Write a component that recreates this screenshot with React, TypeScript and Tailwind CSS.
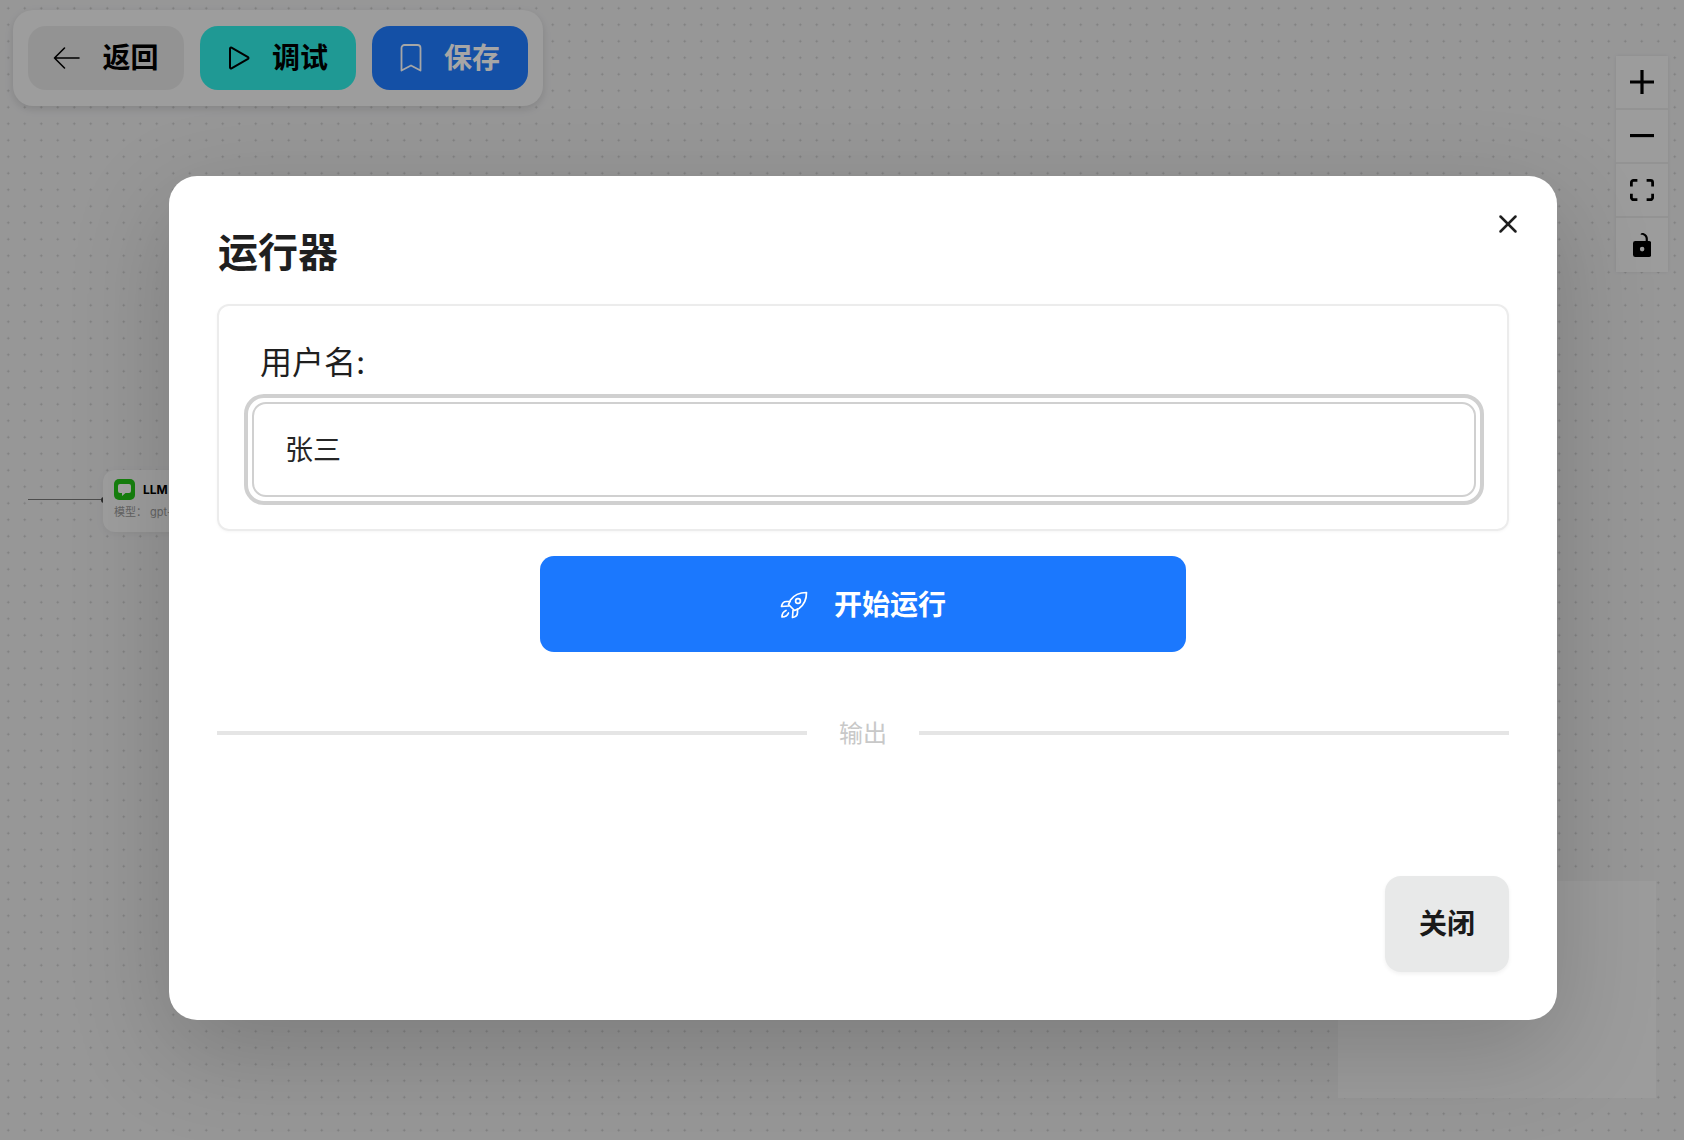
import { X } from "lucide-react"

const font = "font-['Inter','Noto_Sans_CJK_SC',sans-serif]"

function ToolButton({ className, icon, label }: { className: string; icon: React.ReactNode; label: string }) {
  return (
    <button className={`flex h-16 w-[156px] items-center justify-center gap-[22px] rounded-[18px] text-[28px] font-bold ${className}`}>
      {icon}
      <span>{label}</span>
    </button>
  )
}

function ControlButton({ children }: { children: React.ReactNode }) {
  return <button className="flex h-[54px] w-full items-center justify-center border-b-2 border-[#e2e2e2] bg-[#f0f0f0] last:border-b-0">{children}</button>
}

export default function App() {
  return (
    <div className={`relative h-[1140px] w-[1684px] overflow-hidden bg-[#e8e8e9] bg-[radial-gradient(circle,#c0c0c0_0.9px,transparent_1.1px)] bg-[length:16.5px_16.5px] ${font}`}>
      {/* toolbar */}
      <div className="absolute left-[13px] top-[10px] flex gap-4 rounded-[20px] bg-[#f1f1f1] py-4 pl-[15px] pr-[15px] shadow-[0_3px_8px_rgba(0,0,0,0.12)]">
        <ToolButton
          className="bg-[#e2e2e2] text-black"
          icon={
            <svg width="27" height="24" viewBox="0 0 27 24" fill="none" stroke="currentColor" strokeWidth="1.6" strokeLinecap="round" strokeLinejoin="round">
              <path d="M26 12H1.5M11.5 2 1.5 12l10 10" />
            </svg>
          }
          label="返回"
        />
        <ToolButton
          className="bg-[#30ece3] text-black"
          icon={
            <svg width="22" height="24" viewBox="0 0 22 24" fill="none" stroke="currentColor" strokeWidth="2" strokeLinejoin="round">
              <path d="M2 2.5v19a1 1 0 0 0 1.500.8l16.500-9.500a1 1 0 0 0 0-1.700L3.500 1.700A1 1 0 0 0 2 2.500z" />
            </svg>
          }
          label="调试"
        />
        <ToolButton
          className="bg-[#1f7bff] text-white"
          icon={
            <svg width="22" height="28" viewBox="0 0 22 28" fill="none" stroke="currentColor" strokeWidth="1.8" strokeLinejoin="round">
              <path d="M1.500 4a3 3 0 0 1 3-3h13a3 3 0 0 1 3 3v22.500L11 21.500 1.500 26.500z" />
            </svg>
          }
          label="保存"
        />
      </div>

      {/* zoom controls */}
      <div className="absolute left-[1616px] top-[56px] flex w-[52px] flex-col shadow-[0_0_4px_rgba(0,0,0,0.08)]">
        <ControlButton>
          <svg viewBox="0 0 32 32" className="h-6 w-6 fill-black">
            <path d="M32 18.133H18.133V32h-4.266V18.133H0v-4.266h13.867V0h4.266v13.867H32z" />
          </svg>
        </ControlButton>
        <ControlButton>
          <svg viewBox="0 0 32 5" className="w-6 fill-black">
            <path d="M0 0h32v4.2H0z" />
          </svg>
        </ControlButton>
        <ControlButton>
          <svg viewBox="0 0 32 30" className="w-6 fill-black">
            <path d="M3.692 4.63c0-.53.4-.938.939-.938h5.215V0H4.708C2.13 0 0 2.054 0 4.63v5.216h3.692V4.631zM27.354 0h-5.2v3.692h5.17c.53 0 .984.4.984.939v5.215H32V4.631A4.624 4.624 0 0027.354 0zm.954 24.83c0 .532-.4.94-.939.94h-5.215v3.768h5.215c2.577 0 4.631-2.13 4.631-4.707v-5.139h-3.692v5.139zm-23.677.94c-.531 0-.939-.4-.939-.94v-5.138H0v5.139c0 2.577 2.13 4.707 4.708 4.707h5.138V25.77H4.631z" />
          </svg>
        </ControlButton>
        <ControlButton>
          <svg viewBox="0 0 25 32" className="h-6 fill-black">
            <path d="M21.333 10.667H19.81V7.619C19.81 3.429 16.38 0 12.19 0c-4.114 1.828-1.37 2.133.305 2.438 1.676.305 4.42 2.59 4.42 5.181v3.048H3.047A3.056 3.056 0 000 13.714v15.238A3.056 3.056 0 003.048 32h18.285a3.056 3.056 0 003.048-3.048V13.714a3.056 3.056 0 00-3.048-3.047zM12.19 24.533a3.056 3.056 0 01-3.047-3.047 3.056 3.056 0 013.047-3.048 3.056 3.056 0 013.048 3.048 3.056 3.056 0 01-3.048 3.047z" />
          </svg>
        </ControlButton>
      </div>

      {/* flow node behind the dialog */}
      <div className="absolute left-[28px] top-[499px] h-px w-[76px] bg-[#777777]" />
      <div className="absolute left-[101px] top-[497px] h-[6px] w-[6px] rounded-full bg-[#444444]" />
      <div className="absolute left-[103px] top-[470px] h-[62px] w-[200px] rounded-xl bg-[#f3f3f3] px-[11px] py-[9px] shadow-[0_2px_8px_rgba(0,0,0,0.05)]">
        <div className="flex items-center gap-2">
          <span className="flex h-[21px] w-[21px] items-center justify-center rounded-[5px] bg-[#22c516]">
            <svg width="13" height="12" viewBox="0 0 13 12" className="fill-white">
              <path d="M2 0h9a2 2 0 0 1 2 2v5a2 2 0 0 1-2 2H7.500L4 12V9H2a2 2 0 0 1-2-2V2a2 2 0 0 1 2-2z" />
            </svg>
          </span>
          <span className="text-xs font-bold text-black">LLM</span>
        </div>
        <div className="mt-1 text-[11px] leading-4 text-[#999999]">模型： gpt-4</div>
      </div>

      {/* minimap */}
      <div className="absolute left-[1338px] top-[881px] h-[217px] w-[318px] bg-[#f0f0f0]" />

      {/* dialog */}
      <div className="absolute inset-0 bg-black/35 pl-[169px] pt-[176px]">
        <div className="relative h-[844px] w-[1388px] rounded-[28px] bg-white px-[48px] pt-[51px] shadow-[0_30px_100px_rgba(0,0,0,0.18)]">
          <button className="absolute right-[34px] top-[33px] text-[#1f1f1f]">
            <X size={30} strokeWidth={2} />
          </button>
          <h2 className="pl-px text-[40px] font-bold leading-[52px] text-[#1f1f1f]">运行器</h2>

          <div className="mt-[25px] h-[227px] rounded-xl border-2 border-[#ececec] pl-[25px] pr-[23px] pt-[36px] shadow-[0_1px_3px_rgba(0,0,0,0.04)]">
            <label className="block pl-[16px] text-[32px] leading-[42px] text-[#1f1f1f]">用户名:</label>
            <div className="mt-[10px] h-[111px] rounded-[20px] border-[4px] border-[#d0d0d0] p-[4px]">
              <div className="flex h-full items-center rounded-[14px] border-2 border-[#d0d0d0] pl-[31px] pt-px text-[28px] text-[#262626]">张三</div>
            </div>
          </div>

          <button className="mx-auto mt-[25px] flex h-[96px] w-[646px] items-center justify-center gap-[26px] rounded-[14px] bg-[#1b78fe] pt-0.5 text-[28px] font-bold text-white">
            <svg width="28" height="28" viewBox="0 0 28 28" fill="none" stroke="currentColor" strokeWidth="1.7" strokeLinecap="round" strokeLinejoin="round">
              <path d="M26.500 1.500C20 1.500 14 4 10.500 9L8.500 13.500l6 6 4.500-2C24 14 26.500 8 26.500 1.500z" />
              <circle cx="18" cy="10" r="2.4" />
              <path d="M10 10.500H6.500C4 10.500 2 12.500 1.500 15.500l7-.5" />
              <path d="M17.500 18v3.500c0 2.500-2 4.500-5 5l.5-7" />
              <path d="M6 19.500c-2.500 1-4 3.500-4 6.500 3 0 5.500-1.500 6.500-4" />
            </svg>
            <span>开始运行</span>
          </button>

          <div className="mt-[62px] flex items-center gap-8">
            <div className="mt-px h-1 flex-1 bg-[#e5e5e5]" />
            <span className="pt-1 text-[24px] leading-8 text-[#c8c8c8]">输出</span>
            <div className="mt-px h-1 flex-1 bg-[#e5e5e5]" />
          </div>

          <div className="mt-[126px] flex justify-end">
            <button className="h-24 w-[124px] rounded-2xl bg-[#e8e9e9] text-[28px] font-bold text-[#1a1a1a] shadow-[0_2px_4px_rgba(0,0,0,0.06)]">关闭</button>
          </div>
        </div>
      </div>
    </div>
  )
}
